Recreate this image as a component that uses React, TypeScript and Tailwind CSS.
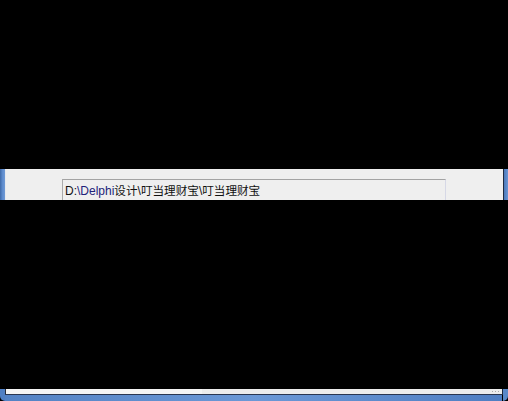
import React from "react";

export default function App() {
  const cjk = "text-[11.6px] [font-family:'Noto_Sans_CJK_SC',sans-serif]";
  return (
    <div className="w-[508px] h-[401px] bg-black flex flex-col overflow-hidden" style={{ fontFamily: '"Liberation Sans", "Noto Sans CJK SC", sans-serif' }}>
      <div className="h-[169px] shrink-0" />
      {/* band */}
      <div className="h-[31px] shrink-0 flex">
        <div className="w-[5px] bg-gradient-to-r from-[#3f6aa8] via-[#5d8bcc] to-[#6f9ad6]" />
        <div className="w-[1px] bg-[#e6e9ee]" />
        <div className="flex-1 bg-[#efefef] pl-[56px] pt-[10px] overflow-hidden">
          <div className="w-[384px] h-[30px] bg-[#efefef] border-t border-l border-t-[#a3a3a3] border-l-[#ababab] border-r border-r-[#d6d8e6] flex items-start pl-[2px] pt-[2px]">
            <span className="text-[12px] leading-[16px] text-[#111] whitespace-nowrap">
              D:<span className="text-[#22227a]">\Delphi</span>
              <span className={cjk}>设计</span>\<span className={cjk}>叮当理财宝</span>\<span className={cjk}>叮当理财宝</span>
            </span>
          </div>
        </div>
        <div className="w-[1px] bg-[#1e2a40]" />
        <div className="w-[4px] bg-gradient-to-r from-[#4b78ba] to-[#6a96d4]" />
      </div>
      <div className="flex-1" />
      {/* bottom */}
      <div className="h-[12px] shrink-0 flex">
        <div className="w-[5px] bg-[#4f7fc3] rounded-bl-[6px]" />
        <div className="flex-1 flex flex-col">
          <div className="h-[5px] flex">
            <div className="w-[197px] bg-[#f4f4f4] border-l border-[#222a3a]" />
            <div className="flex-1 bg-[#ececec] flex justify-end items-center pr-[3px] gap-[2px]">
              <span className="w-[1px] h-[1px] bg-[#a8a8a8]" />
              <span className="w-[1px] h-[1px] bg-[#a8a8a8]" />
              <span className="w-[1px] h-[1px] bg-[#a8a8a8]" />
            </div>
          </div>
          <div className="h-[1px] bg-[#2a3650]" />
          <div className="flex-1 bg-gradient-to-r from-[#5382c4] via-[#6b98d6] to-[#4f7ec2]" />
        </div>
        <div className="w-[1px] bg-[#1e2a40] h-[6px]" />
        <div className="w-[5px] bg-[#5a88c8] rounded-br-[6px]" />
      </div>
    </div>
  );
}
